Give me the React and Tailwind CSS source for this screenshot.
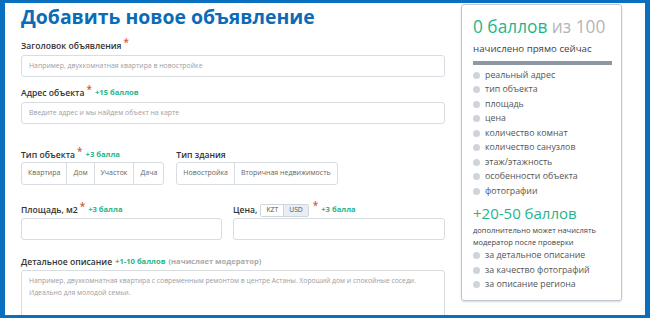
import React from 'react';

const green = 'text-[#1fb58a]';

const Star = () => (
  <span className="text-[#e0533d] text-[10px] relative -top-[4px] ml-[2px] leading-none">*</span>
);

const Label = ({ children, required, bonus, note, className = '' }) => (
  <div className={`flex items-center h-[14px] text-[8.6px] font-semibold text-[#333] ${className}`}>
    <span>{children}</span>
    {required && <Star />}
    {bonus && <span className={`${green} text-[7.6px] font-bold ml-[3px]`}>{bonus}</span>}
    {note && <span className="text-[#aaa] text-[7.6px] font-bold ml-[3px]">{note}</span>}
  </div>
);

const Input = ({ placeholder, className = '' }) => (
  <div className={`h-[22px] border border-[#d8dde2] rounded-[3px] bg-white flex items-center px-[7px] text-[6.9px] text-[#9aa0a6] ${className}`}>
    {placeholder}
  </div>
);

const Group = ({ items }) => (
  <div className="flex h-[23px] border border-[#d8dde2] rounded-[3px] bg-white">
    {items.map((it, i) => (
      <div
        key={it}
        className={`flex items-center px-[6px] text-[7px] text-[#666] ${i > 0 ? 'border-l border-[#d8dde2]' : ''}`}
      >
        {it}
      </div>
    ))}
  </div>
);

const Dot = ({ children }) => (
  <div className="flex items-center h-[14.5px] text-[8.8px] text-[#555]">
    <span className="w-[7px] h-[7px] rounded-full bg-[#cfd4da] mr-[5px] shrink-0" />
    <span>{children}</span>
  </div>
);

export default function App() {
  return (
    <div
      className="w-[650px] h-[318px] overflow-hidden bg-white border-l-[5px] border-r-[5px] border-t-[3px] border-b-[3px] border-[#0b6fc0] flex"
      style={{ fontFamily: '"Open Sans", "Noto Sans", sans-serif' }}
    >
      {/* Form */}
      <div className="pl-[16px] w-[440px] shrink-0">
        <h1 className="text-[19.4px] leading-[28px] font-bold text-[#0c6bb6]">Добавить новое объявление</h1>

        <Label required className="mt-[8px]">Заголовок объявления</Label>
        <Input className="mt-[2px]" placeholder="Например, двухкомнатная квартира в новостройке" />

        <Label required bonus="+15 баллов" className="mt-[9px]">Адрес объекта</Label>
        <Input className="mt-[2px]" placeholder="Введите адрес и мы найдем объект на карте" />

        <div className="flex mt-[24px]">
          <div>
            <Label required bonus="+3 балла">Тип объекта</Label>
            <Group items={['Квартира', 'Дом', 'Участок', 'Дача']} />
          </div>
          <div className="ml-[12px]">
            <Label>Тип здания</Label>
            <Group items={['Новостройка', 'Вторичная недвижимость']} />
          </div>
        </div>

        <div className="flex gap-[11px] mt-[18px]">
          <div className="w-[201px]">
            <Label required bonus="+3 балла">Площадь, м2</Label>
            <Input className="mt-[1px]" />
          </div>
          <div className="flex-1">
            <div className="flex items-center h-[14px] text-[8.6px] font-semibold text-[#333]">
              <span>Цена,</span>
              <div className="flex ml-[3px] h-[13px] border border-[#cfd5db] rounded-[2px] text-[6.8px] font-normal text-[#555]">
                <span className="px-[5px] flex items-center bg-white">KZT</span>
                <span className="px-[5px] flex items-center bg-[#e8eef4] border-l border-[#cfd5db]">USD</span>
              </div>
              <span className="ml-[2px]"><Star /></span>
              <span className={`${green} text-[7.6px] font-bold ml-[3px]`}>+3 балла</span>
            </div>
            <Input className="mt-[1px]" />
          </div>
        </div>

        <Label bonus="+1-10 баллов" note="(начисляет модератор)" className="mt-[15px]">Детальное описание</Label>
        <div className="mt-[1px] h-[60px] border border-[#d8dde2] rounded-[3px] px-[7px] pt-[4px] text-[6.8px] leading-[12px] text-[#9aa0a6]">
          Например, двухкомнатная квартира с современным ремонтом в центре Астаны. Хороший дом и спокойные соседи. Идеально для молодой семьи.
        </div>
      </div>

      {/* Score panel */}
      <div className="ml-[16px] mt-[1px] w-[161px] h-[297px] border border-[#bfc6cd] rounded-[3px] shadow-[0_1px_2px_rgba(0,0,0,0.15)] pl-[11px] pr-[9px] pt-[10px]">
        <div className="text-[17.3px] leading-[24px]">
          <span className="text-[#1fb58a]">0 баллов</span>
          <span className="text-[#b5b5b5]"> из 100</span>
        </div>
        <div className="text-[9.7px] text-[#444] mt-[3px] leading-[13px]">начислено прямо сейчас</div>
        <div className="h-[4px] bg-[#8c98a4] mt-[6px] mb-[3px]" />
        <Dot>реальный адрес</Dot>
        <Dot>тип объекта</Dot>
        <Dot>площадь</Dot>
        <Dot>цена</Dot>
        <Dot>количество комнат</Dot>
        <Dot>количество санузлов</Dot>
        <Dot>этаж/этажность</Dot>
        <Dot>особенности объекта</Dot>
        <Dot>фотографии</Dot>
        <div className="text-[15px] leading-[20px] text-[#1fb58a] mt-[4px]">+20-50 баллов</div>
        <div className="text-[7.5px] leading-[12px] text-[#444] mt-[1px]">
          дополнительно может начислять<br />модератор после проверки
        </div>
        <div className="mt-[1px]">
          <Dot>за детальное описание</Dot>
          <Dot>за качество фотографий</Dot>
          <Dot>за описание региона</Dot>
        </div>
      </div>
    </div>
  );
}
